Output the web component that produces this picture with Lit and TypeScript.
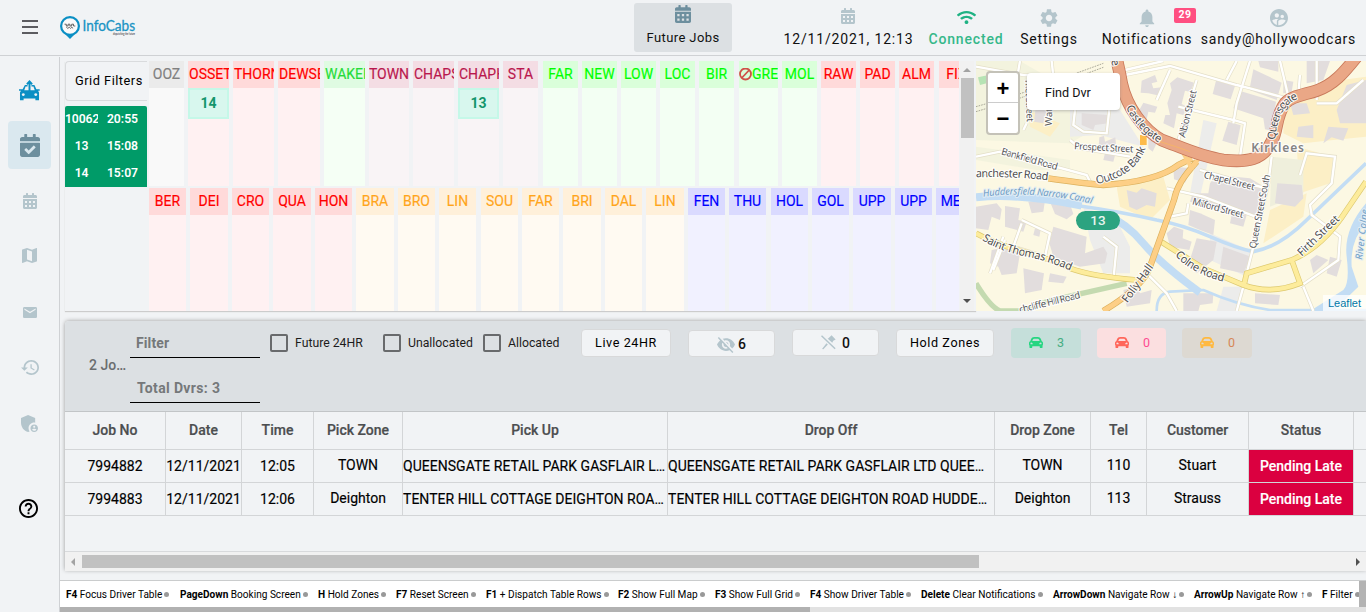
import { LitElement, html, svg, css } from "lit";
import { customElement, property } from "lit/decorators.js";

type Icon = { box: string; d: string };
const ICONS: Record<string, Icon> = {
  calendar: { box: "0 0 448 512", d: "M0 464c0 26.500 21.500 48 48 48h352c26.500 0 48-21.500 48-48V192H0v272zm320-208h64v64h-64zm0 128h64v64h-64zM192 256h64v64h-64zm0 128h64v64h-64zM64 256h64v64H64zm0 128h64v64H64zM400 64h-48V16c0-8.800-7.200-16-16-16h-32c-8.800 0-16 7.200-16 16v48H160V16c0-8.800-7.200-16-16-16h-32c-8.800 0-16 7.200-16 16v48H48C21.500 64 0 85.500 0 112v48h448v-48c0-26.500-21.500-48-48-48z" },
  check: { box: "0 0 448 512", d: "M436 160H12c-6.627 0-12-5.373-12-12v-36c0-26.510 21.490-48 48-48h48V12c0-6.627 5.373-12 12-12h40c6.627 0 12 5.373 12 12v52h128V12c0-6.627 5.373-12 12-12h40c6.627 0 12 5.373 12 12v52h48c26.510 0 48 21.490 48 48v36c0 6.627-5.373 12-12 12zM12 192h424c6.627 0 12 5.373 12 12v260c0 26.510-21.490 48-48 48H48c-26.510 0-48-21.490-48-48V204c0-6.627 5.373-12 12-12zm333.296 95.947l-28.169-28.398c-4.667-4.705-12.265-4.736-16.970-.068L194.120 364.665l-45.980-46.352c-4.667-4.705-12.266-4.736-16.971-.068l-28.397 28.170c-4.705 4.667-4.736 12.265-.068 16.970l82.601 83.269c4.667 4.705 12.265 4.736 16.970.068l142.953-141.805c4.705-4.667 4.736-12.265.068-16.970z" },
  gear: { box: "2 2 20 20", d: "M19.14 12.94c.04-.3.06-.61.06-.94 0-.32-.02-.64-.07-.94l2.030-1.580c.18-.14.23-.41.12-.61l-1.920-3.320c-.12-.22-.37-.29-.59-.22l-2.390.96c-.5-.38-1.030-.7-1.620-.94L14.400 2.810c-.04-.24-.24-.41-.48-.41h-3.840c-.24 0-.43.17-.47.41L9.250 5.350C8.660 5.590 8.120 5.920 7.630 6.290L5.240 5.330c-.22-.08-.47 0-.59.22L2.740 8.870c-.12.21-.08.47.12.61l2.030 1.580C4.840 11.360 4.800 11.690 4.800 12s.02.64.07.94l-2.030 1.580c-.18.14-.23.41-.12.61l1.920 3.320c.12.22.37.29.59.22l2.390-.96c.5.38 1.030.7 1.620.94l.36 2.540c.05.24.24.41.48.41h3.840c.24 0 .44-.17.47-.41l.36-2.540c.59-.24 1.130-.56 1.620-.94l2.390.96c.22.08.47 0 .59-.22l1.920-3.320c.12-.22.07-.47-.12-.61zM12 15.600c-1.980 0-3.600-1.620-3.600-3.600s1.620-3.600 3.600-3.600 3.600 1.620 3.600 3.600-1.620 3.600-3.600 3.600z" },
  bell: { box: "2 2 20 20", d: "M12 22c1.100 0 2-.9 2-2h-4c0 1.100.89 2 2 2zm6-6v-5c0-3.070-1.640-5.640-4.500-6.320V4c0-.83-.67-1.500-1.500-1.500s-1.500.67-1.500 1.500v.68C7.630 5.360 6 7.920 6 11v5l-2 2v1h16v-1l-2-2z" },
  users: { box: "2 2 20 20", d: "M11.990 2c-5.520 0-10 4.480-10 10s4.480 10 10 10 10-4.480 10-10-4.480-10-10-10zm3.610 6.340c1.070 0 1.930.86 1.930 1.930 0 1.070-.86 1.930-1.930 1.930-1.070 0-1.930-.86-1.930-1.930-.01-1.070.86-1.930 1.930-1.930zm-6-1.580c1.300 0 2.360 1.060 2.360 2.360 0 1.300-1.060 2.360-2.360 2.360s-2.360-1.060-2.360-2.360c0-1.310 1.050-2.360 2.360-2.360zm0 9.130v3.750c-2.400-.75-4.300-2.600-5.140-4.960 1.050-1.120 3.670-1.690 5.140-1.690.53 0 1.200.08 1.900.22-1.640.87-1.900 2.020-1.900 2.680zM11.990 20c-.27 0-.53-.01-.79-.04v-4.070c0-1.420 2.940-2.130 4.400-2.130 1.070 0 2.920.39 3.840 1.150-1.170 2.970-4.060 5.090-7.450 5.090z" },
  wifi: { box: "0 0 640 512", d: "M634.910 154.880C457.740-8.990 182.190-8.930 5.090 154.880c-6.660 6.160-6.790 16.590-.35 22.980l34.240 33.970c6.140 6.100 16.020 6.230 22.400.38 145.920-133.680 371.300-133.710 517.250 0 6.380 5.850 16.260 5.710 22.400-.38l34.240-33.970c6.430-6.390 6.300-16.820-.36-22.980zM320 352c-35.350 0-64 28.650-64 64s28.650 64 64 64 64-28.650 64-64-28.650-64-64-64zm202.670-83.590c-115.260-101.930-290.210-101.820-405.340 0-6.900 6.100-7.120 16.690-.57 23.150l34.440 33.990c6 5.920 15.660 6.320 22.050.8 83.950-72.570 209.740-72.410 293.490 0 6.390 5.520 16.050 5.130 22.050-.8l34.440-33.990c6.560-6.460 6.330-17.060-.56-23.150z" },
  map: { box: "3 3 18 18", d: "M20.500 3l-.16.03L15 5.100 9 3 3.360 4.900c-.21.07-.36.25-.36.48V20.500c0 .28.22.5.5.5l.16-.03L9 18.900l6 2.100 5.640-1.900c.21-.07.36-.25.36-.48V3.500c0-.28-.22-.5-.5-.5zM15 19l-6-2.110V5l6 2.110V19z" },
  mail: { box: "2 4 20 16", d: "M20 4H4c-1.100 0-1.990.9-1.990 2L2 18c0 1.100.9 2 2 2h16c1.100 0 2-.9 2-2V6c0-1.100-.9-2-2-2zm0 4l-8 5-8-5V6l8 5 8-5v2z" },
  history: { box: "1 3 21 18", d: "M13 3c-4.970 0-9 4.030-9 9H1l3.890 3.890.07.14L9 12H6c0-3.870 3.130-7 7-7s7 3.130 7 7-3.130 7-7 7c-1.930 0-3.680-.79-4.940-2.060l-1.420 1.420C8.270 19.990 10.510 21 13 21c4.970 0 9-4.030 9-9s-4.030-9-9-9zm-1 5v5l4.280 2.540.72-1.210-3.500-2.080V8H12z" },
  shield: { box: "3 3 18 18", d: "M17 11c.34 0 .67.04 1 .09V6.270L10.500 3 3 6.270v4.910c0 4.540 3.200 8.790 7.500 9.820.55-.13 1.080-.32 1.600-.55-.69-.98-1.100-2.170-1.100-3.450 0-3.310 2.690-6 6-6zM17 13c-2.210 0-4 1.790-4 4s1.790 4 4 4 4-1.790 4-4-1.790-4-4-4zm0 1.380c.62 0 1.120.51 1.120 1.120s-.51 1.120-1.120 1.120-1.120-.51-1.120-1.120.5-1.120 1.120-1.120zm0 5.370c-.93 0-1.740-.46-2.240-1.170.05-.72 1.510-1.080 2.240-1.080s2.190.36 2.240 1.080c-.5.71-1.310 1.170-2.240 1.170z" },
  help: { box: "2 2 20 20", d: "M11 18h2v-2h-2v2zm1-16C6.480 2 2 6.480 2 12s4.480 10 10 10 10-4.480 10-10S17.520 2 12 2zm0 18c-4.410 0-8-3.590-8-8s3.590-8 8-8 8 3.590 8 8-3.590 8-8 8zm0-14c-2.210 0-4 1.790-4 4h2c0-1.100.9-2 2-2s2 .9 2 2c0 2-3 1.750-3 5h2c0-2.250 3-2.500 3-5 0-2.210-1.790-4-4-4z" },
  hidden: { box: "1 3 22 19", d: "M12 7c2.760 0 5 2.240 5 5 0 .65-.13 1.260-.36 1.830l2.920 2.920c1.510-1.260 2.700-2.890 3.430-4.750-1.730-4.390-6-7.500-11-7.500-1.400 0-2.740.25-3.980.7l2.160 2.160C10.740 7.130 11.350 7 12 7zM2 4.270l2.280 2.280.46.46C3.080 8.300 1.780 10.020 1 12c1.730 4.390 6 7.500 11 7.500 1.550 0 3.030-.3 4.380-.84l.42.42L19.730 22 21 20.730 3.270 3 2 4.270zM7.530 9.800l1.550 1.550c-.05.21-.08.43-.08.65 0 1.660 1.340 3 3 3 .22 0 .44-.03.65-.08l1.550 1.550c-.67.33-1.410.53-2.200.53-2.760 0-5-2.240-5-5 0-.79.2-1.530.53-2.200zm4.310-.78l3.150 3.150.02-.16c0-1.660-1.340-3-3-3l-.17.01z" },
  unpin: { box: "0 0 44 44", d: "M3 1L43 39L40 42L0 4zM21 10L31 1L43 13L36 17L33 23L19 10zM16 24L20 28L7 42L3 41z" },
  car: { box: "0 32 480 448", d: "M438.660 212.330l-11.240-28.100-19.930-49.830C390.380 91.630 349.570 64 303.500 64h-127c-46.060 0-86.880 27.630-103.990 70.400l-19.930 49.830-11.240 28.100C17.220 221.500 0 244.660 0 272v48c0 16.120 6.160 30.670 16 41.930V416c0 17.670 14.330 32 32 32h32c17.670 0 32-14.330 32-32v-32h256v32c0 17.670 14.330 32 32 32h32c17.670 0 32-14.330 32-32v-54.070c9.840-11.250 16-25.800 16-41.930v-48c0-27.340-17.220-50.500-41.340-59.670zm-306.730-54.160c7.290-18.220 24.940-30.170 44.570-30.170h127c19.630 0 37.280 11.950 44.570 30.170L368 208H112l19.930-49.830zM80 319.800c-19.200 0-32-12.760-32-31.900S60.800 256 80 256s48 28.710 48 47.850-28.800 15.950-48 15.950zm320 0c-19.200 0-48 3.190-48-15.950S380.800 256 400 256s32 12.760 32 31.900-12.800 31.900-32 31.900z" },
  dispatch: { box: "0 0 64 64", d: "M32 0L42 11L38 15L35 12V31H29V12L26 15L22 11zM18 15H26V20H20L16 31H48L44 20H38V15H47L53 28H63V33H58L61 38V62H50V56H14V62H3V38L6 33H0V28H11zM13 40a4.500 4.500 0 1 0 .1 0zM51 40a4.500 4.500 0 1 0 .1 0z" },
  menu: { box: "0 0 16 14", d: "M0 0h16v2H0zM0 6h16v2H0zM0 12h16v2H0z" },
  left: { box: "0 0 4 8", d: "M4 0V8L0 4z" },
  right: { box: "0 0 4 8", d: "M0 0V8L4 4z" },
  up: { box: "0 0 8 4", d: "M0 4H8L4 0z" },
  down: { box: "0 0 8 4", d: "M0 0H8L4 4z" },
};
const icon = (name: string, w: number, h: number) => svg`
  <svg width=${w} height=${h} viewBox=${ICONS[name].box} preserveAspectRatio="none" fill="currentColor" fill-rule="evenodd"><path d=${ICONS[name].d}></path></svg>`;

@customElement("top-bar")
class TopBar extends LitElement {
  static styles = css`
    :host { display: flex; height: 55px; border-bottom: 1px solid #cfd1d4; color: #111; }
    svg { display: block; }
    .menu { color: #5c5c60; padding: 20px 22px 0; }
    .logo { padding-top: 15px; width: 574px; }
    .item { display: flex; flex-direction: column; align-items: center; white-space: nowrap; font-size: 14px; letter-spacing: 0.8px; color: #b4c5cc; }
    .pic { height: 31px; display: flex; align-items: flex-start; padding-top: 8px; box-sizing: border-box; position: relative; }
    .txt { line-height: 17px; color: #111; }
    .sel { background: #dce0e3; border-radius: 3px; margin-top: 3px; height: 49px; width: 98px; color: #6d8f9e; font-size: 13px; letter-spacing: 0.4px; }
    .sel .pic { height: 26px; padding-top: 2px; }
    .date { width: 129px; margin-left: 52px; letter-spacing: 0.85px; }
    .date svg { margin-right: 1px; }
    .conn { width: 76px; margin-left: 15px; color: #1fb283; font-weight: 500; letter-spacing: 0.85px; }
    .conn .txt { color: #35b88a; }
    .conn .pic { padding-top: 10px; }
    .set { width: 60px; margin-left: 15px; }
    .note { width: 92px; margin-left: 22px; }
    .user { width: 157px; margin-left: 7px; }
    .set .pic, .user .pic, .note .pic { padding-top: 9px; }
    .badge { position: absolute; left: 36px; top: 8px; width: 22px; height: 15px; border-radius: 2px; background: #ff4f81; color: #fff; font-size: 10.500px; font-weight: 700; line-height: 14px; text-align: center; letter-spacing: 0.6px; }
  `;
  render() {
    return html`
      <div class="menu">${icon("menu", 16, 14)}</div>
      <div class="logo"><svg width="80" height="26" viewBox="0 0 80 26">
        <path d="M10 24L5.500 19.500H14.500z" fill="#0b8fc4"></path><circle cx="10" cy="11" r="8.900" fill="#fafafa" stroke="#0b8fc4" stroke-width="2.200"></circle>
        <path d="M4.500 9.200h1.800v1.800h1.800v-1.800h1.800v1.800h1.800v-1.800h1.800v1.800h1.800M6.300 12.200l1.500 1.200l1.500-1.200l1.200 1.200l1.300-1.200l1.300 1.200" fill="none" stroke="#555" stroke-width="0.9"></path>
        <text x="22.500" y="16" font-family="Lato, sans-serif" font-size="14.500" fill="#1a93c4" stroke="#1a93c4" stroke-width=".3" textLength="52.500" lengthAdjust="spacingAndGlyphs">InfoCabs</text>
        <text x="53" y="19.500" font-family="Lato, sans-serif" font-size="2.700" font-weight="700" fill="#555" textLength="22" lengthAdjust="spacingAndGlyphs">dispatching the future</text>
      </svg></div>
      <div class="item sel"><div class="pic">${icon("calendar", 16, 18)}</div><div class="txt">Future Jobs</div></div>
      <div class="item date"><div class="pic">${icon("calendar", 14, 16)}</div><div class="txt">12/11/2021, 12:13</div></div>
      <div class="item conn"><div class="pic">${icon("wifi", 19, 15)}</div><div class="txt">Connected</div></div>
      <div class="item set"><div class="pic">${icon("gear", 18, 18)}</div><div class="txt">Settings</div></div>
      <div class="item note"><div class="pic">${icon("bell", 18, 18)}<span class="badge">29</span></div><div class="txt">Notifications</div></div>
      <div class="item user"><div class="pic">${icon("users", 18, 18)}</div><div class="txt">sandy@hollywoodcars</div></div>`;
  }
}

@customElement("side-nav")
class SideNav extends LitElement {
  static styles = css`
    :host { display: flex; flex-direction: column; align-items: center; box-sizing: border-box; width: 60px; margin-top: 1px; border-right: 1px solid #cfd1d4; color: #b4c5cc; }
    .cell { width: 43px; height: 48px; display: flex; align-items: center; justify-content: center; border-radius: 4px; }
    .dispatch { color: #0b8fc4; margin-top: 9px; }
    .active { background: #dae8ef; color: #6d8f9e; margin-top: 7px; }
    .cal { margin-top: 8px; } .map { margin-top: 6px; } .mail { margin-top: 9px; }
    .history { margin-top: 7px; } .shield { margin-top: 8px; } .help { margin-top: 37px; padding-right: 2px; color: #000; }
  `;
  render() {
    return html`
      <div class="cell dispatch">${icon("dispatch", 21, 21)}</div>
      <div class="cell active">${icon("check", 20, 23)}</div>
      <div class="cell cal">${icon("calendar", 14, 16)}</div>
      <div class="cell map">${icon("map", 15, 15)}</div>
      <div class="cell mail">${icon("mail", 14, 11)}</div>
      <div class="cell history">${icon("history", 18, 15)}</div>
      <div class="cell shield">${icon("shield", 17, 17)}</div>
      <div class="cell help">${icon("help", 19, 19)}</div>`;
  }
}

type Zone = [string, number, number, string, string?];
const ZONES_TOP: Zone[] = [
  ["OOZ", 35, 4, "grey"], ["OSSET", 41, 4, "red", "14"], ["THORN", 41, 4, "red"], ["DEWSB", 42, 4, "red"], ["WAKEF", 41, 4, "green"],
  ["TOWN", 40, 4, "wine"], ["CHAPS", 41, 4, "wine"], ["CHAPH", 41, 4, "wine", "13"], ["STA", 35, 5, "wine"], ["FAR", 35, 4, "lime"],
  ["NEW", 35, 4, "lime"], ["LOW", 35, 4, "lime"], ["LOC", 35, 4, "lime"], ["BIR", 35, 5, "lime"], ["GRE", 39, 4, "lime"], ["MOL", 35, 4, "lime"],
  ["RAW", 35, 4, "red"], ["PAD", 35, 4, "red"], ["ALM", 35, 5, "red"], ["FIX", 35, 4, "red"],
];
const ZONES_BOTTOM: Zone[] = [
  ["BER", 37, 4, "red"], ["DEI", 38, 4, "red"], ["CRO", 37, 4, "red"], ["QUA", 38, 4, "red"], ["HON", 37, 4, "red"],
  ["BRA", 38, 4, "orange"], ["BRO", 37, 4, "orange"], ["LIN", 37, 5, "orange"], ["SOU", 37, 4, "orange"], ["FAR", 37, 4, "orange"],
  ["BRI", 38, 4, "orange"], ["DAL", 37, 4, "orange"], ["LIN", 38, 4, "orange"], ["FEN", 37, 4, "blue"], ["THU", 37, 5, "blue"],
  ["HOL", 37, 4, "blue"], ["GOL", 37, 4, "blue"], ["UPP", 38, 4, "blue"], ["UPP", 37, 4, "blue"], ["MEL", 37, 4, "blue"],
];

@customElement("zone-grid")
class ZoneGrid extends LitElement {
  static styles = css`
    :host { display: flex; width: 911px; height: 250px; box-shadow: 0 1px 1px #ccc; }
    .left { width: 82px; margin-right: 2px; flex: none; }
    .filters { box-sizing: border-box; height: 40px; border: 1px solid #d9dbdd; border-right: 0; border-radius: 4px 0 0 4px; padding-left: 9px; font-size: 12.800px; line-height: 38px; letter-spacing: 0.5px; white-space: nowrap; margin-bottom: 5px; color: #000; }
    .drivers { background: #009b68; border-radius: 2px 2px 0 0; color: #fff; font-size: 12.200px; font-weight: 600; }
    .driver { display: grid; grid-template-columns: 33px 49px; height: 27px; line-height: 26px; text-align: center; }
    .driver > span { overflow: hidden; letter-spacing: -0.1px; }
    .driver > .time { letter-spacing: 0; }
    .zones { width: 810px; overflow: hidden; flex: none; }
    .row { display: flex; height: 125px; margin-bottom: 2px; }
    .zone { flex: none; overflow: hidden; }
    .name { height: 27px; line-height: 27px; font-size: 14px; display: flex; justify-content: center; align-items: center; overflow: hidden; -webkit-text-stroke: 0.15px currentColor; }
    .name svg { flex: none; }
    .long { justify-content: flex-start; padding-left: 1px; }
    .tight { justify-content: flex-start; }
    .job { box-sizing: border-box; height: 31px; border: 2px solid #c5f8e8; background: #d8f7ee; color: #13956b; font-weight: 700; font-size: 14px; line-height: 27px; text-align: center; }
    .grey { background: #f9f9f9; color: #808080; } .grey .name { background: #ebebeb; }
    .red { background: #fff1f2; color: #f00; } .red .name { background: #ffdada; }
    .green { background: #f5fff5; color: #26dc39; } .green .name { background: #dffbe2; }
    .wine { background: #f9f4f6; color: #b9174d; } .wine .name { background: #f4dde4; }
    .lime { background: #f3fff3; color: #00ff00; } .lime .name { background: #daffda; }
    .orange { background: #fffaf2; color: #ffa51a; } .orange .name { background: #fff0da; }
    .blue { background: #f1f1ff; color: #00f; } .blue .name { background: #dadaff; }
    .bar { width: 14px; margin-left: 1px; background: #f1f1f1; display: flex; flex-direction: column; align-items: center; color: #a3a3a3; box-sizing: border-box; padding: 7px 0 8px; }
    .thumb { width: 13px; height: 60px; background: #c1c1c1; margin-top: 6px; margin-bottom: auto; }
    .end { color: #505050; }
    svg { display: block; flex: none; }
  `;
  row(zones: Zone[]) {
    return html`<div class="row">${zones.map(([n, w, gap, tone, job]) => html`
      <div class="zone ${tone}" style="width:${w}px;margin-right:${gap}px">
        <div class="name ${n.length > 4 ? "long" : n === "GRE" ? "tight" : ""}">${n === "GRE" ? svg`<svg width="13" height="14" viewBox="0 0 13 14" fill="none" stroke="#cf5048" stroke-width="1.800"><circle cx="6.500" cy="6" r="5.500"></circle><path d="M2.700 10L10.300 2"></path></svg>` : ""}${n}</div>
        ${job ? html`<div class="job">${job}</div>` : ""}
      </div>`)}</div>`;
  }
  render() {
    return html`
      <div class="left">
        <div class="filters">Grid Filters</div>
        <div class="drivers">${[["10062", "20:55"], ["13", "15:08"], ["14", "15:07"]].map(([a, b]) => html`<div class="driver"><span>${a}</span><span class="time">${b}</span></div>`)}</div>
      </div>
      <div class="zones">${this.row(ZONES_TOP)}${this.row(ZONES_BOTTOM)}</div>
      <div class="bar">${icon("up", 8, 4)}<div class="thumb"></div><span class="end">${icon("down", 8, 4)}</span></div>`;
  }
}

const BLOCKS = [
  "M515 62L555 45L562 65L545 70L550 85L575 82L572 108L535 100L512 98z", "M508 150L520 128L562 140L555 158L535 155L530 178L505 172z", "M592 130L605 90L600 70L622 52L672 68L662 96L645 92L635 132L650 140L640 165L620 160L612 205L580 190L586 165L600 165z",
  "M738 62L795 78L782 118L728 102z", "M850 28L935 68L920 120L838 90z", "M808 92L918 125L905 212L885 208L880 175L790 145z",
  "M775 185L812 196L800 255L757 242z", "M865 3H925V35L870 22z", "M1010 3L1080 3L1060 60L1010 70z", "M1130 75L1188 60L1188 190L1110 190L1100 150z",
  "M960 130L1010 130L1020 160L970 165z", "M1075 200L1135 205L1120 242L1085 232L1060 250z", "M985 200L1030 195L1030 235L980 230z", "M940 60L970 65L965 95L940 100z",
  "M922 370L995 375L1000 415L975 440L915 430z", "M740 345L840 355L890 385L870 470L830 465L820 500L780 490L785 465L700 435L660 425L668 400L715 400L720 370z",
  "M610 320L665 325L645 368L612 358z", "M470 390L500 398L515 385L560 400L555 440L530 435L500 450L478 440z", "M660 450L690 460L735 480L730 525L690 510L655 495z",
  "M590 520L612 500L640 510L638 535L665 545L658 570L600 560z", "M680 535L740 545L730 600L680 640L655 615z", "M760 560L842 590L820 640L750 625z",
  "M18 440L80 430L95 448L90 480L65 470L55 510L18 505z", "M105 438L150 445L145 480L170 485L160 515L105 500z", "M175 425L225 420L220 455L185 460z", "M240 425L300 432L310 462L290 478L255 462z",
  "M65 570L115 560L150 580L140 640L95 645L85 620L60 610z", "M195 505L212 510L208 530L190 525z", "M250 500L300 515L350 530L345 580L400 560L412 580L405 610L330 620L300 610L250 590L238 550z",
  "M160 625L222 640L215 690L165 700z", "M240 640L290 650L280 670L235 665z",
  "M460 690L500 680L510 700L545 690L540 730L470 740z", "M640 700L730 700L728 730L690 735L685 753L640 753z", "M855 700L930 705L925 735L855 730z", "M1080 590L1115 600L1100 650L1070 640z",
  "M388 232L402 228L405 245L436 232L438 255L412 262L438 275L430 305L400 300L405 280L385 275z", "M335 160L420 165L415 190L375 195L370 210L335 195z", "M197 145L230 150L220 190L192 185z", "M1020 600L1040 585L1075 600L1030 640z", "M535 230L562 245L548 275L535 265z",
];
const MINOR = [
  "M18 20L160 45L440 60", "M150 3L140 60", "M245 3L250 50", "M465 45L600 18L800 75L840 85L950 115", "M465 30L580 3", "M840 3L800 130L790 190", "M680 60L650 160L625 240", "M625 140L790 180L825 190L810 290", "M930 3L955 110",
  "M990 45L985 100", "M1040 3L1040 120", "M300 240L330 265L480 290", "M18 290L90 275L350 345L360 365", "M420 130L410 220L340 215L310 195L315 150", "M590 385L700 410L870 475",
  "M690 330L850 375L890 385", "M905 290L895 370L870 480L830 640", "M990 345L1010 280L1095 290L1085 370L1020 435L1025 465L1110 530L1105 600L990 680", "M1180 60L1100 130L1040 130", "M100 530L60 640", "M105 540L70 630",
  "M155 490L130 560L70 545M130 560L230 590", "M155 480L240 520L225 590", "M400 530L440 560L430 660", "M530 640L560 670L590 700L620 753", "M820 680L800 753", "M1000 680L1030 753", "M800 3L770 60", "M160 210L170 190", "M560 120L600 30", "M620 400L600 470L650 460L655 430",
];
const WATER = "M330 438Q450 455 560 480Q640 495 720 530T850 575Q930 560 1010 480L1188 310";

@customElement("town-map")
class TownMap extends LitElement {
  static styles = css`
    :host { display: block; position: relative; width: 390px; height: 250px; overflow: hidden; }
    .canvas { display: block; }
    .lbl { font-family: "Noto Sans", "Open Sans", sans-serif; font-size: 29px; fill: #555558; stroke: #fff; stroke-width: 7px; stroke-linejoin: round; paint-order: stroke; stroke-opacity: 0.85; }
    .big { font-size: 33px; fill: #4c4c4e; }
    .town { font-size: 36px; font-weight: 600; fill: #838383; letter-spacing: 2px; }
    .river { fill: #6f9cc4; font-style: italic; stroke: #e3eef5; }
    .minor { fill: none; stroke: #e4dfc8; stroke-width: 11; } .minor2 { fill: none; stroke: #fff; stroke-width: 7; }
    .o1 { fill: none; stroke: #dbb05c; stroke-width: 19; } .o2 { fill: none; stroke: #fdcf86; stroke-width: 15; }
    .y1 { fill: none; stroke: #ddc96f; stroke-width: 17; } .y2 { fill: none; stroke: #fdec9c; stroke-width: 13; }
    .r1 { fill: none; stroke: #c8785a; stroke-width: 38; stroke-linejoin: round; } .r2 { fill: none; stroke: #eaa786; stroke-width: 33; stroke-linejoin: round; }
    .zoom { position: absolute; left: 10px; top: 10px; width: 30px; height: 60px; border: 2px solid #c4c2b8; border-radius: 4px; background: #fff; background-clip: padding-box; }
    .zoom span { display: block; height: 30px; box-sizing: border-box; text-align: center; font: 700 22px/31px "Liberation Sans", sans-serif; color: #000; }
    .zoom .plus { border-bottom: 1px solid #ccc; }
    .find { position: absolute; left: 51px; top: 12px; width: 93px; height: 37px; padding-left: 18px; box-sizing: border-box; background: #fff; border-radius: 4px; box-shadow: 0 1px 3px #8888; font-size: 12.600px; line-height: 39px; color: #111; }
    .pin { position: absolute; left: 100px; top: 150px; width: 44px; height: 19px; border-radius: 10px; background: #2ca380; color: #e8f5ef; font-size: 13.500px; font-weight: 500; line-height: 19px; text-align: center; }
    .credit { position: absolute; right: 0; bottom: 0; background: #ffffffc0; padding: 0 5px; font: 11px/16px "Liberation Sans", sans-serif; color: #0078a8; }
  `;
  render() {
    const queen = "M1160 -10C1120 40 1090 75 1040 92C1000 105 965 108 945 130C915 170 925 210 905 245C880 300 830 308 760 300C690 290 630 260 575 240C520 210 470 140 455 70Q448 30 438 -10";
    const main = "M235 355Q340 370 400 375Q560 365 625 315L665 295M680 305C640 350 620 380 612 420L540 620Q520 680 400 753";
    const yellow = "M18 520Q80 555 180 580Q260 605 300 625Q370 650 500 660M565 540L700 625L820 675Q900 705 990 670L965 600L830 640L822 675M965 600Q1060 560 1130 450L1188 365";
    return html`
      <svg class="canvas" width="390" height="250" viewBox="18 3 1170 750">
        <defs>
          <path id="castle" d="M468 142Q495 205 570 250"></path><path id="outcote" d="M380 372Q500 350 530 255"></path><path id="manch" d="M18 352Q130 348 240 362"></path>
          <path id="canal" d="M40 410Q190 390 368 432"></path><path id="saint" d="M36 540Q90 575 180 592Q240 605 305 633"></path><path id="bank" d="M92 283L270 333"></path>
          <path id="colne" d="M615 585Q660 640 770 668"></path><path id="firth" d="M995 590L1120 470"></path><path id="queens" d="M915 240Q925 130 990 115"></path>
        </defs>
        <rect x="18" y="3" width="1170" height="750" fill="#fcf8e3"></rect>
        <path d="M18 3H150L440 170L300 250L18 240zM18 260L300 300L300 330L200 330L18 300z" fill="#f3f3de"></path>
        <path d="M440 380L580 350L600 420L540 480L450 440zM900 450L1010 400L1000 470L880 550zM980 260L1090 290L1080 370L990 400zM940 130L1040 70L1188 50V230L1090 240L1000 250L940 220zM170 150L270 190L240 230L180 200z" fill="#fcefc6"></path>
        <path d="M300 120L450 150L520 260L390 225L300 230zM340 440L440 480L480 560L480 640L400 640L360 540zM740 190L690 410L660 400L700 180zM720 520L850 575L830 650L720 600zM760 680H820L800 753H740z" fill="#ececeb"></path>
        <path d="M905 290L1000 300V400L900 440z" fill="#efefdc"></path>
        <path d="M24 52L56 45L50 70L30 75z" fill="#b6e3b4"></path>
        ${BLOCKS.map((d) => svg`<path d=${d} fill="#e2dddd"></path>`)}
        <path d="M18 670Q60 740 90 753H150L240 722L470 670" fill="none" stroke="#c4dab0" stroke-width="16"></path>
        <path d=${WATER} fill="none" stroke="#c3ddf4" stroke-width="11"></path>
        <path d="M18 412Q150 398 335 437" fill="none" stroke="#c3ddf4" stroke-width="24"></path>
        <path d="M400 460Q470 490 520 550T690 698" fill="none" stroke="#c3ddf4" stroke-width="23"></path>
        <path d="M560 753Q560 700 600 695L700 690Q800 735 900 750H1188" fill="none" stroke="#c3ddf4" stroke-width="8"></path>
        <path d="M1188 430Q1120 510 1130 590T1120 690L1020 753H1090L1165 680L1145 620Q1140 540 1188 490z" fill="#c3ddf4"></path>
        ${MINOR.map((d) => svg`<path class="minor" d=${d}></path>`)}${MINOR.map((d) => svg`<path class="minor2" d=${d}></path>`)}
        <path d="M18 140L140 105L400 10M18 155L140 118L400 22M18 345L70 345" fill="none" stroke="#aaa99a" stroke-width="3" stroke-dasharray="5 3"></path>
        <path class="y1" d=${yellow}></path><path class="y2" d=${yellow}></path>
        <path class="o1" d=${main}></path><path class="o2" d=${main}></path>
        <path d="M520 225V255" stroke="#fdbb4a" stroke-width="20"></path>
        <path d="M668 330L640 280M670 320L690 290" fill="none" stroke="#fdcf86" stroke-width="12"></path>
        <path class="r1" d=${queen}></path><path class="r2" d=${queen}></path>
        <path d="M570 245Q620 260 660 275" fill="none" stroke="#f5b46a" stroke-width="3"></path>
        <text class="lbl big"><textPath href="#castle" textLength="148">Castlegate</textPath></text>
        <text class="lbl big"><textPath href="#outcote" textLength="190">Outcote Bank</textPath></text>
        <text class="lbl big"><textPath href="#manch" textLength="216">anchester Road</textPath></text>
        <text class="lbl river"><textPath href="#canal" textLength="328">Huddersfield Narrow Canal</textPath></text>
        <text class="lbl big"><textPath href="#saint" textLength="282">Saint Thomas Road</textPath></text>
        <text class="lbl"><textPath href="#bank" textLength="175">Bankfield Road</textPath></text>
        <text class="lbl big"><textPath href="#colne" textLength="168">Colne Road</textPath></text>
        <text class="lbl big"><textPath href="#firth" textLength="160">Firth Street</textPath></text>
        <text class="lbl big"><textPath href="#queens" textLength="150">Queensgate</textPath></text>
        <text class="lbl" x="312" y="268" textLength="178" transform="rotate(3 312 268)">Prospect Street</text>
        <text class="lbl" x="645" y="234" textLength="145" transform="rotate(-76 645 234)">Albion Street</text>
        <text class="lbl" x="700" y="353" textLength="156" transform="rotate(14 700 353)">Chapel Street</text>
        <text class="lbl" x="665" y="433" textLength="158" transform="rotate(15 665 433)">Milford Street</text>
        <text class="lbl" x="857" y="567" textLength="226" transform="rotate(-79 857 567)">Queen Street South</text>
        <text class="lbl big" x="472" y="730" textLength="134" transform="rotate(-54 472 730)">Folly Hall</text>
        <text class="lbl" x="150" y="759" textLength="188" transform="rotate(-14 150 759)">chcliffe Hill Road</text>
        <text class="lbl river" x="1176" y="600" textLength="152" transform="rotate(-83 1176 600)">River Colne</text>
        <text class="lbl" x="245" y="198" transform="rotate(-88 245 198)">Water</text>
        <text class="lbl" x="166" y="60" textLength="126" transform="rotate(88 166 60)">rket Street</text>
        <text class="lbl big" x="420" y="-10" transform="rotate(75 420 -10)">te</text>
        <text class="lbl town" x="844" y="275" textLength="160">Kirklees</text>
      </svg>
      <div class="zoom"><span class="plus">+</span><span>−</span></div>
      <div class="find">Find Dvr</div>
      <div class="pin">13</div>
      <div class="credit">Leaflet</div>`;
  }
}

@customElement("job-panel")
class JobPanel extends LitElement {
  static styles = css`
    :host { display: block; width: 1301px; height: 249px; margin-top: 10px; box-shadow: 0 0 4px #999; border-radius: 4px 0 0 0; overflow: visible; color: #000; }
    svg { display: block; flex: none; }
    .tools { display: flex; height: 90px; background: #dce0e3; border-bottom: 1px solid #c2c5c7; border-radius: 4px 0 0 0; }
    .count { width: 37px; padding: 0 4px 0 24px; line-height: 89px; font-size: 14px; font-weight: 500; color: #6a6d6f; white-space: nowrap; }
    .fields { width: 130px; color: #75787a; font-weight: 700; font-size: 14px; letter-spacing: 0.1px; }
    .field { height: 37px; box-sizing: border-box; border-bottom: 1px solid #000; padding: 13px 0 0 6px; line-height: 18px; }
    .total { height: 45px; padding-top: 21px; padding-left: 7px; letter-spacing: 0.35px; }
    .option { display: flex; align-items: center; height: 18px; margin-top: 13px; white-space: nowrap; font-size: 12.250px; line-height: 16px; color: #1c1c1c; }
    .box { width: 14px; height: 14px; border: 2px solid #686a6c; border-radius: 2px; margin-right: 7px; flex: none; }
    .future { width: 113px; margin-left: 10px; } .un { width: 100px; } .alloc { width: 98px; }
    .btn { box-sizing: border-box; height: 28px; margin-top: 8px; margin-right: 18px; background: #f1f3f5; border: 1px solid #d8d9da; border-radius: 4px; display: flex; align-items: center; justify-content: center; font-size: 12.600px; letter-spacing: 0.6px; line-height: 26px; white-space: nowrap; }
    .live { width: 90px; margin-right: 17px; } .hid { width: 87px; margin-top: 9px; height: 27px; margin-right: 17px; } .pins { width: 87px; height: 27px; margin-right: 17px; } .hold { width: 98px; margin-right: 17px; }
    .hid, .pins { color: #b4c5cc; gap: 3px; } .pins { gap: 6px; }
    .hid svg { margin-top: 2px; }
    .hid b, .pins b { color: #111; font-size: 14px; font-weight: 500; letter-spacing: 0; }
    .pill { width: 70px; height: 30px; margin-top: 7px; margin-right: 16px; border-radius: 4px; box-sizing: border-box; padding-left: 18px; display: flex; align-items: center; gap: 14px; font-size: 12.500px; }
    .pill span { padding-bottom: 1px; } .pill svg { margin-bottom: 1px; }
    .free { background: #c5dfda; color: #26d681; } .free span { color: #46ae83; }
    .busy { width: 69px; background: #fbdfe0; color: #ff675b; } .busy span { color: #ff4b90; }
    .away { background: #ddd9d2; color: #ffb940; } .away span { color: #d68757; }
    .table { display: grid; height: 139px; border-bottom: 1px solid #d8dadc; overflow: hidden; grid-template-columns: 101px 76px 72px 89px 265px 327px 96px 56px 102px 105px 13px; grid-template-rows: 38px 33px 33px 35px; background: #f1f3f5; }
    .c { box-sizing: border-box; border-right: 1px solid #d3d5d7; border-bottom: 1px solid #d3d5d7; text-align: center; white-space: nowrap; overflow: hidden; font-size: 14px; line-height: 31px; -webkit-text-stroke: 0.15px currentColor; }
    .h { font-weight: 500; color: #4c4e50; line-height: 37px; -webkit-text-stroke: 0.2px #4c4e50; }
    .late { background: #db0040; color: #fff; font-weight: 500; line-height: 33px; }
    .addr { text-align: left; text-overflow: ellipsis; padding-right: 1px; line-height: 33px; letter-spacing: 0.03px; }
    .num { line-height: 33px; }
    .scroll { height: 19px; background: #f1f1f1; display: flex; align-items: center; color: #a3a3a3; padding: 0 6px; box-sizing: border-box; }
    .thumb { width: 897px; height: 13px; background: #c1c1c1; margin-left: 7px; margin-right: auto; }
    .next { color: #505050; }
  `;
  render() {
    const heads = ["Job No", "Date", "Time", "Pick Zone", "Pick Up", "Drop Off", "Drop Zone", "Tel", "Customer", "Status", ""];
    const rows = [
      ["7994882", "12/11/2021", "12:05", "TOWN", "QUEENSGATE RETAIL PARK GASFLAIR L…", "QUEENSGATE RETAIL PARK GASFLAIR LTD QUEE…", "TOWN", "110", "Stuart", "Pending Late", ""],
      ["7994883", "12/11/2021", "12:06", "Deighton", "TENTER HILL COTTAGE DEIGHTON ROA…", "TENTER HILL COTTAGE DEIGHTON ROAD HUDDE…", "Deighton", "113", "Strauss", "Pending Late", ""],
    ];
    const kind = (i: number) => (i === 9 ? "late" : i === 4 || i === 5 ? "addr" : i < 3 ? "num" : "");
    return html`
      <div class="tools">
        <div class="count">2 Jo…</div>
        <div class="fields"><div class="field">Filter</div><div class="field total">Total Dvrs: 3</div></div>
        <div class="option future"><span class="box"></span>Future 24HR</div>
        <div class="option un"><span class="box"></span>Unallocated</div>
        <div class="option alloc"><span class="box"></span>Allocated</div>
        <div class="btn live">Live 24HR</div>
        <div class="btn hid">${icon("hidden", 18, 16)}<b>6</b></div>
        <div class="btn pins">${icon("unpin", 15, 15)}<b>0</b></div>
        <div class="btn hold">Hold Zones</div>
        <div class="pill free">${icon("car", 14, 13)}<span>3</span></div>
        <div class="pill busy">${icon("car", 14, 13)}<span>0</span></div>
        <div class="pill away">${icon("car", 14, 13)}<span>0</span></div>
      </div>
      <div class="table">
        ${heads.map((h) => html`<div class="c h">${h}</div>`)}
        ${rows.map((r) => r.map((v, i) => html`<div class="c ${kind(i)}">${v}</div>`))}
      </div>
      <div class="scroll">${icon("left", 4, 8)}<div class="thumb"></div><span class="next">${icon("right", 4, 8)}</span></div>`;
  }
}

@customElement("key-hints")
class KeyHints extends LitElement {
  @property({ attribute: false }) hints: [string, string, number][] = [
    ["F4", "Focus Driver Table", 114], ["PageDown", "Booking Screen", 138], ["H", "Hold Zones", 78], ["F7", "Reset Screen", 90],
    ["F1", "+ Dispatch Table Rows", 132], ["F2", "Show Full Map", 97], ["F3", "Show Full Grid", 95], ["F4", "Show Driver Table", 111],
    ["Delete", "Clear Notifications", 132], ["ArrowDown", "Navigate Row ↓", 141], ["ArrowUp", "Navigate Row ↑", 128], ["F", "Filter", 50],
  ];
  static styles = css`
    :host { display: block; height: 31px; border-top: 1px solid #cacccd; background: #fff; margin-top: 10px; color: #000; }
    .line { display: flex; height: 26px; }
    .list { display: flex; width: 1293px; padding-left: 6px; overflow: hidden; font-size: 10.080px; line-height: 27px; white-space: nowrap; }
    .hint { flex: none; display: flex; align-items: center; }
    .label { padding-right: 2px; }
    .dot { width: 5px; height: 5px; border-radius: 50%; background: #999; margin-top: 1px; }
    .side { width: 7px; background: #b3b3b3; }
    .track { height: 5px; background: #e2e2e2; }
    .thumb { width: 750px; height: 5px; background: #b1b1b1; }
  `;
  render() {
    return html`
      <div class="line">
        <div class="list">${this.hints.map(([k, t, w]) => html`<div class="hint" style="width:${w}px"><span class="label"><b>${k}</b> ${t}</span><span class="dot"></span></div>`)}</div>
        <div class="side"></div>
      </div>
      <div class="track"><div class="thumb"></div></div>`;
  }
}

@customElement("app-root")
class AppRoot extends LitElement {
  static styles = css`
    :host { display: flex; flex-direction: column; width: 1366px; height: 612px; overflow: hidden; background: #f1f3f5; font-family: Roboto, "Liberation Sans", sans-serif; }
    .body { display: flex; flex: 1; min-height: 0; }
    .main { width: 1306px; flex: none; }
    .work { padding: 5px 0 0 5px; }
    .top { display: flex; }
  `;
  render() {
    return html`
      <top-bar></top-bar>
      <div class="body">
        <side-nav></side-nav>
        <div class="main">
          <div class="work">
            <div class="top"><zone-grid></zone-grid><town-map></town-map></div>
            <job-panel></job-panel>
          </div>
          <key-hints></key-hints>
        </div>
      </div>`;
  }
}
